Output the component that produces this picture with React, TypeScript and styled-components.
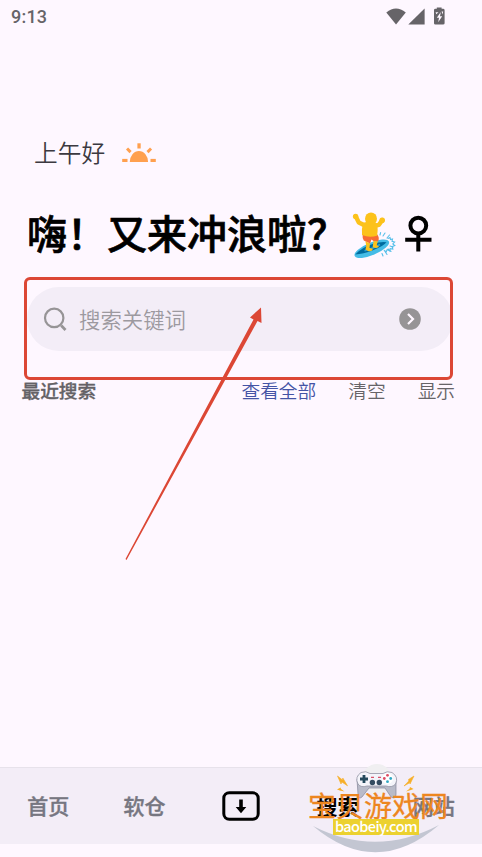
import { createGlobalStyle, styled } from 'styled-components';

const GlobalStyle = createGlobalStyle`
  * {
    box-sizing: border-box;
  }

  body {
    margin: 0;
    background-color: #fef7ff;
    font-family: 'Noto Sans CJK SC', sans-serif;
    overflow: hidden;
  }
`;

const tabs = [
  { label: '首页' },
  { label: '软仓' },
  { label: '', icon: true },
  { label: '搜索', active: true },
  { label: '网站' },
];

const StatusBar = () => (
  <StatusContainer>
    <span className="time">9:13</span>
    <svg width="60" height="20" viewBox="0 0 60 20" fill="#666468">
      <path d="M0.3 5.4Q10 -2.2 19.8 5.4L10 17.6Z" />
      <path d="M38.6 1.4V17.6H22.3Z" />
      <path d="M48 3.2Q48 1.8 49.4 1.8H50.8V0.4H55.6V1.8H57Q58.6 1.8 58.6 3.2V16.3Q58.6 17.6 57 17.6H49.4Q48 17.6 48 16.3Z" />
      <path d="M54.8 5L50.8 10.8H53L52.2 15.2L56.2 9.2H54Z" fill="#fef7ff" />
      <path d="M49.6 5.3H52.5L50.3 7.2ZM55.6 4.6H57.2L56.5 7.4Z" fill="#fef7ff" />
    </svg>
  </StatusContainer>
);

const SunIcon = () => (
  <svg width="34" height="20" viewBox="0 0 34 20" fill="#ffa04f">
    <path d="M7.8 19A9.1 11 0 0 1 26.1 19Z" />
    <rect x="15.4" y="0.3" width="3.3" height="5.2" />
    <rect x="0.2" y="15.9" width="5.3" height="3.1" />
    <rect x="28.5" y="15.9" width="5.3" height="3.1" />
    <rect x="-1.5" y="-2.5" width="3" height="5" transform="translate(6.8 7.3) rotate(-45)" />
    <rect x="-1.5" y="-2.5" width="3" height="5" transform="translate(27.3 7.3) rotate(45)" />
  </svg>
);

const SurferIcon = () => (
  <svg width="44" height="46" viewBox="0 0 44 46" fill="none">
    <g stroke="#55bfe9" strokeWidth="1.1" strokeLinecap="round">
      <path d="M28 23l.6-2.4M31 24l2-3M35 26l2.5-3M30 41.5l1 2.5M33 39.5l2 3M36 37l3 2.5M38 34l3 1" />
      <path d="M36 26.5l2-1 .5 2 2-.5-.5 2.4 2.6.6-1.8 2 2 1.6-2.6 1 .6 2.4-2.6-.4-.6 2.4-2.4-1.4-1 2.2-2-1.4" />
    </g>
    <ellipse cx="19.8" cy="36.8" rx="18.6" ry="6.3" transform="rotate(-23 19.8 36.8)" fill="#45bce6" />
    <path d="M3.2 42.4Q10 35.5 20 32.3Q30 29 34.5 30.3Q31 34.6 21 38.2Q11 42.2 3.2 42.4Z" fill="#006b9e" />
    <path d="M12.5 38.8Q21 36.7 28 32.5" stroke="#2f9fce" strokeWidth="1.6" />
    <path d="M10.6 22.5Q18 24 25 22Q28 26 26 29.4L21.4 29L19.5 27.5L18 31.5L11.8 28.5Q10.2 26 10.6 22.5Z" fill="#f76c35" />
    <path d="M13.4 29.3L18 31.5L17.5 36L20.8 36.8Q20.5 39.6 16.5 39.3L13.4 37.5L14.3 34Z" fill="#fcc21b" />
    <path d="M21.6 29L25.8 29.3L24.7 33.2L27 34.5Q25.6 37 20.6 35.3Z" fill="#fcc21b" />
    <path d="M3.7 4.2L6.8 10.5L13.5 13.8M30.3 8.2L26.8 12.8L22 14" stroke="#fcc21b" strokeWidth="4.4" strokeLinecap="round" strokeLinejoin="round" />
    <circle cx="3.6" cy="4.4" r="2.7" fill="#fcc21b" />
    <circle cx="30.2" cy="8.2" r="2.8" fill="#fcc21b" />
    <ellipse cx="19" cy="6.8" rx="6" ry="6.4" fill="#fcc21b" />
    <path d="M11 11Q17 8 24.5 11Q26.5 16 25 23.8Q17 26.2 10 23Q9.4 17 11 11Z" fill="#fcc21b" />
  </svg>
);

const FemaleIcon = () => (
  <svg width="28" height="38" viewBox="0 0 28 38" fill="none" stroke="#000" strokeWidth="4">
    <circle cx="13.3" cy="10.6" r="7.9" />
    <path d="M13.3 18V36.5M0.2 24.8H26.5" />
  </svg>
);

const SearchBox = () => (
  <SearchContainer>
    <svg width="24" height="24" viewBox="0 0 24 24" fill="none" stroke="#969496" strokeWidth="2.2">
      <circle cx="11.2" cy="10.9" r="9.2" />
      <path d="M18.2 18.6L22.5 22.9" strokeWidth="2.8" />
    </svg>
    <span className="placeholder">搜索关键词</span>
    <svg width="22" height="22" viewBox="0 0 22 22">
      <circle cx="11" cy="11" r="10.8" fill="#969496" />
      <path d="M9 6L14 11L9 16" fill="none" stroke="#fef7ff" strokeWidth="2.2" />
    </svg>
  </SearchContainer>
);

const DownloadIcon = () => (
  <svg width="38" height="30" viewBox="0 0 38 30">
    <rect x="1.8" y="1.8" width="34.4" height="26.4" rx="5.5" fill="none" stroke="#000" strokeWidth="3" />
    <path d="M17.2 8.5H20.8V16H24.3L19 22.3L13.7 16H17.2Z" />
  </svg>
);

const Watermark = () => (
  <WatermarkContainer>
    <svg width="140" height="92" viewBox="0 0 140 92">
      <circle cx="69" cy="15" r="15" fill="#f0eff1" />
      <path d="M5 62Q68 115 131 61Q68 94 5 62Z" fill="#c3c6d2" />
      <path d="M49 15L50 30Q50 36 54 33L61 24H77L83 33Q88 36 88 30L88 15Z" fill="#b9bbc9" stroke="#85879a" strokeWidth="0.7" />
      <path d="M53 8.5Q58 6.5 62 9.5H75Q79 6.5 84 8.5Q91 13 87.5 20Q84 24 78 22H59Q53 24 50 20Q46.5 13 53 8.5Z" fill="#f4f4fa" stroke="#9293a3" strokeWidth="0.8" />
      <path d="M52 15H60M56 11V19" stroke="#24495c" strokeWidth="2.8" />
      <circle cx="79.5" cy="14.5" r="5.4" fill="#fff" />
      <circle cx="79.5" cy="11.3" r="1.4" fill="#de4e65" />
      <circle cx="76.3" cy="14.5" r="1.4" fill="#de4e65" />
      <circle cx="82.7" cy="14.5" r="1.4" fill="#31a7c3" />
      <circle cx="79.5" cy="17.7" r="1.4" fill="#31a7c3" />
      <circle cx="64.4" cy="18.5" r="2.7" fill="#344b61" />
      <circle cx="71.3" cy="18.5" r="2.7" fill="#344b61" />
      <path d="M63 13.4H66M70 13.4H73" stroke="#d85269" strokeWidth="1.4" />
      <path d="M29.5 12L34.5 16L34.8 14L39.5 21.8L33.8 18L33 20Z" fill="#f6af28" stroke="#f6af28" strokeWidth="0.6" />
      <path d="M29 25.5L32.5 23.5L33 25L36.5 27.5L31.8 26.4Z" fill="#f6af28" />
      <path d="M106 12L100.5 15.4L100.8 17L96 22L102 18.6L102 20Z" fill="#f6af28" stroke="#f6af28" strokeWidth="0.6" />
      <path d="M105.5 25L102 23L101.5 24.7L98 27.5L103 26Z" fill="#f6af28" />
    </svg>
    <span className="brand">宝贝游戏网</span>
    <span className="domain">baobeiy.com</span>
  </WatermarkContainer>
);

const App = () => {
  return (
    <Screen>
      <GlobalStyle />
      <StatusBar />
      <Greeting>
        上午好
        <SunIcon />
      </Greeting>
      <Title>
        <span>嗨！又来冲浪啦？</span>
        <SurferIcon />
        <FemaleIcon />
      </Title>
      <SearchBox />
      <RecentRow>
        <strong>最近搜索</strong>
        <Action color="#4453a5">查看全部</Action>
        <Action>清空</Action>
        <Action>显示</Action>
      </RecentRow>
      <TabBar>
        {tabs.map((tab, index) => (
          <Tab key={index} $active={tab.active}>
            {tab.icon ? <DownloadIcon /> : <span>{tab.label}</span>}
          </Tab>
        ))}
      </TabBar>
      <Highlight />
      <Arrow width="140" height="256" viewBox="0 0 140 256">
        <path d="M0.5 253L128.5 13.5L125 11.5L136 1.5L136.5 17L132.5 15L1.5 254Z" fill="#dc4735" />
      </Arrow>
      <Watermark />
    </Screen>
  );
};

const Screen = styled.div`
  position: relative;
  display: flex;
  flex-direction: column;
  width: 482px;
  height: 857px;
  padding-bottom: 13px;
  background-color: #fef7ff;
  overflow: hidden;
`;

const StatusContainer = styled.div`
  display: flex;
  align-items: center;
  justify-content: space-between;
  height: 33px;
  padding: 0 36px 0 11px;

  .time {
    font-family: Roboto, sans-serif;
    font-size: 18px;
    font-weight: 500;
    letter-spacing: 0.2px;
    color: #666468;
  }
`;

const Greeting = styled.div`
  display: flex;
  align-items: center;
  gap: 17px;
  height: 36px;
  margin-top: 101px;
  padding-left: 34px;
  font-size: 23.7px;
  font-weight: 350;
  line-height: 36px;
  color: #3c3940;

  svg {
    margin-top: 2px;
  }
`;

const Title = styled.div`
  display: flex;
  align-items: center;
  height: 60px;
  margin-top: 32px;
  padding-left: 27px;
  font-size: 40px;
  font-weight: 500;
  line-height: 60px;
  color: #000;
  -webkit-text-stroke: 0.7px #000;

  span {
    width: 325px;
    white-space: nowrap;
  }

  svg {
    margin-top: 6px;
  }

  svg:last-child {
    margin: 4px 0 0 9px;
  }
`;

const SearchContainer = styled.div`
  display: flex;
  align-items: center;
  height: 64px;
  margin: 25px 29px 0 27px;
  padding: 0 32px 0 16px;
  border-radius: 32px;
  background-color: #f3edf7;

  .placeholder {
    flex: 1;
    margin: -2px 0 0 12px;
    font-size: 21.4px;
    font-weight: 350;
    color: #9c999f;
  }
`;

const RecentRow = styled.div`
  display: flex;
  align-items: center;
  gap: 32px;
  height: 28px;
  margin-top: 25px;
  padding: 0 27px 0 21.5px;
  font-size: 18.7px;
  line-height: 28px;

  strong {
    flex: 1;
    font-weight: 500;
    color: #646266;
    -webkit-text-stroke: 0.3px #646266;
  }
`;

const Action = styled.span<{ color?: string }>`
  font-weight: 350;
  color: ${({ color }) => color || '#666468'};
`;

const TabBar = styled.div`
  display: grid;
  grid-template-columns: repeat(5, 1fr);
  height: 77px;
  margin-top: auto;
  padding-bottom: 1px;
  border-top: 1px solid #e7e2eb;
  background-color: #f3edf7;
`;

const Tab = styled.div<{ $active?: boolean }>`
  display: flex;
  align-items: center;
  justify-content: center;
  font-size: 21px;
  font-weight: ${({ $active }) => ($active ? 700 : 500)};
  color: ${({ $active }) => ($active ? '#000' : '#767681')};
  -webkit-text-stroke: ${({ $active }) => ($active ? '0' : '0.4px #767681')};

  span {
    margin-bottom: 2px;
  }
`;

const Highlight = styled.div`
  position: absolute;
  top: 277px;
  left: 24px;
  width: 429px;
  height: 103px;
  border: 3px solid #dc4735;
  border-radius: 6px;
`;

const Arrow = styled.svg`
  position: absolute;
  top: 306px;
  left: 125px;
`;

const WatermarkContainer = styled.div`
  position: absolute;
  top: 764px;
  left: 308px;
  width: 140px;
  height: 93px;

  svg {
    position: absolute;
    inset: 0;
  }

  .brand {
    position: absolute;
    top: 21px;
    left: 0;
    font-size: 28px;
    font-weight: 400;
    line-height: 40px;
    white-space: nowrap;
    color: #ed861f;
    -webkit-text-stroke: 0.3px #ed861f;
  }

  .domain {
    position: absolute;
    top: 55px;
    left: 25px;
    width: 86px;
    height: 16px;
    background-color: #ecd12f;
    font-size: 14.5px;
    font-weight: 500;
    letter-spacing: -0.6px;
    line-height: 14px;
    text-align: center;
    color: #fff;
  }
`;

export default App;
